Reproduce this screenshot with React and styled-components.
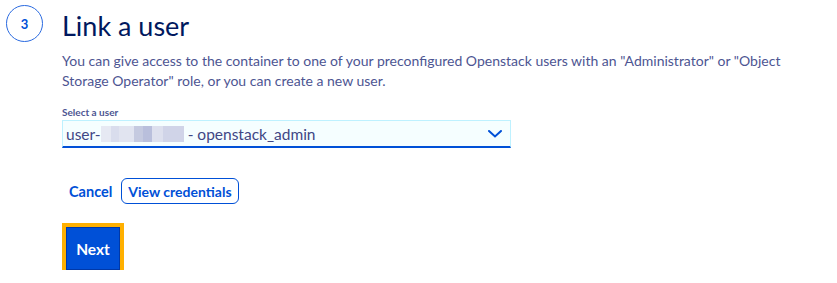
import styled, { createGlobalStyle } from "styled-components";

const GlobalStyle = createGlobalStyle`
  body {
    margin: 0;
    background: #ffffff;
    font-family: "Lato", "Liberation Sans", sans-serif;
  }
`;

const Step = styled.section`
  display: flex;
  gap: 19px;
  padding: 5px 0 0 6px;
`;

const StepNumber = styled.div`
  flex: none;
  width: 35px;
  height: 35px;
  border: 1px solid #2a6ae0;
  border-radius: 50%;
  display: flex;
  align-items: center;
  justify-content: center;
  color: #0050d7;
  font-size: 13px;
  font-weight: 700;
`;

const Content = styled.div`
  display: flex;
  flex-direction: column;
  width: 760px;
`;

const Title = styled.h2`
  margin: 0;
  height: 42px;
  line-height: 41px;
  font-size: 27px;
  font-weight: 400;
  color: #00185e;
`;

const Desc = styled.p`
  margin: 4px 0 0;
  font-size: 14px;
  line-height: 20px;
  color: #4d5592;
`;

const Label = styled.label`
  display: block;
  margin-top: 14px;
  font-size: 10px;
  line-height: 14px;
  font-weight: 700;
  color: #4d5592;
`;

const Select = styled.div`
  box-sizing: border-box;
  width: 449px;
  height: 28px;
  margin-top: 1px;
  padding: 0 8px 0 3px;
  display: flex;
  align-items: center;
  justify-content: space-between;
  background: #f5feff;
  border: 1px solid #bef1ff;
  border-bottom: 2px solid #0050d7;
  color: #3f4785;
  font-size: 15.5px;
`;

const Value = styled.span`
  display: flex;
  align-items: center;
`;

const Blur = styled.span`
  display: inline-block;
  width: 83px;
  height: 16px;
  margin-right: 4px;
  background: linear-gradient(
    90deg,
    #e6e9f3 0 12%,
    #d9dded 12% 22%,
    #e1e4f0 22% 40%,
    #c5cae0 40% 50%,
    #b9bfdc 50% 62%,
    #dde0ee 62% 75%,
    #d0d4e8 75% 100%
  );
`;

const Actions = styled.div`
  display: flex;
  align-items: center;
  gap: 9px;
  margin-top: 30px;
  padding-left: 7px;
`;

const TextButton = styled.button`
  background: none;
  border: none;
  padding: 0;
  font-family: inherit;
  font-size: 14.5px;
  font-weight: 700;
  color: #0050d7;
`;

const OutlineButton = styled(TextButton)`
  height: 26px;
  padding: 0 6px;
  border: 1px solid #0050d7;
  border-radius: 6px;
  font-size: 14px;
`;

const NextButton = styled.button`
  box-sizing: border-box;
  align-self: flex-start;
  margin: 23px 0 0 4px;
  width: 54px;
  height: 43px;
  background: #0050d7;
  border: 1px solid #0038a8;
  outline: 4px solid #ffb000;
  font-family: inherit;
  font-size: 15.5px;
  font-weight: 700;
  color: #ffffff;
`;

const Chevron = () => (
  <svg width="14" height="8" viewBox="0 0 14 8" fill="none">
    <path d="M1 1l6 5.5L13 1" stroke="#0050d7" strokeWidth="2" strokeLinecap="round" />
  </svg>
);

export default function App() {
  return (
    <>
      <GlobalStyle />
      <Step>
        <StepNumber>3</StepNumber>
        <Content>
          <Title>Link a user</Title>
          <Desc>
            You can give access to the container to one of your preconfigured
            Openstack users with an "Administrator" or "Object Storage
            Operator" role, or you can create a new user.
          </Desc>
          <Label>Select a user</Label>
          <Select>
            <Value>
              user-
              <Blur />
              - openstack_admin
            </Value>
            <Chevron />
          </Select>
          <Actions>
            <TextButton>Cancel</TextButton>
            <OutlineButton>View credentials</OutlineButton>
          </Actions>
          <NextButton>Next</NextButton>
        </Content>
      </Step>
    </>
  );
}
